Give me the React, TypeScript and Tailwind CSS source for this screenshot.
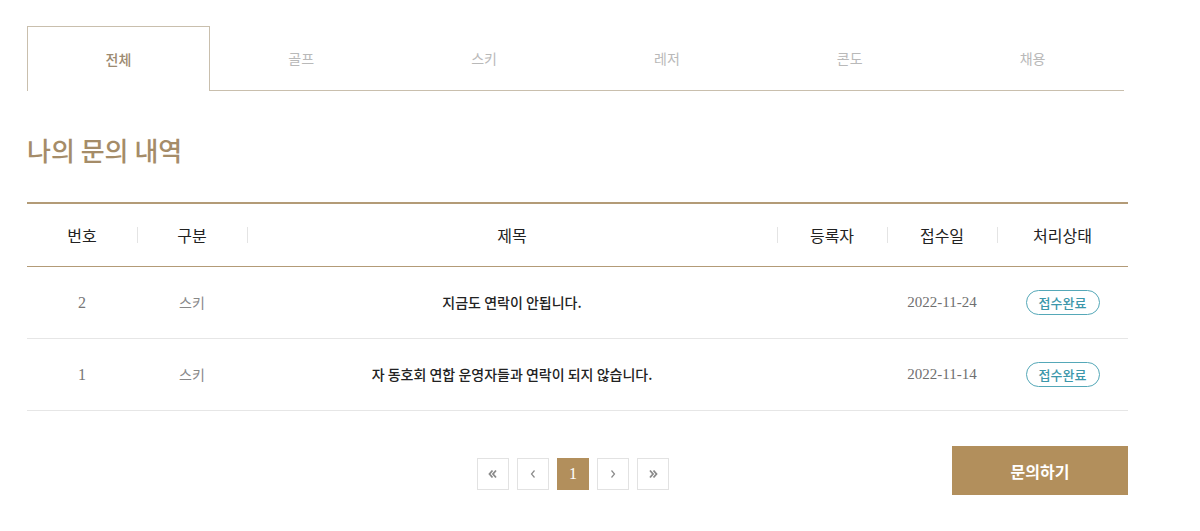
import React from 'react';

interface Inquiry {
  no: number;
  category: string;
  title: string;
  writer: string;
  date: string;
  status: string;
}

const tabs = ['전체', '골프', '스키', '레저', '콘도', '채용'];

const inquiries: Inquiry[] = [
  { no: 2, category: '스키', title: '지금도 연락이 안됩니다.', writer: '', date: '2022-11-24', status: '접수완료' },
  { no: 1, category: '스키', title: '자  동호회 연합 운영자들과 연락이 되지 않습니다.', writer: '', date: '2022-11-14', status: '접수완료' },
];

const cols = ['w-[110px]', 'w-[110px]', 'w-[530px]', 'w-[110px]', 'w-[110px]', 'flex-1'];
const heads = ['번호', '구분', '제목', '등록자', '접수일', '처리상태'];

const kr = { fontFamily: '"Noto Sans CJK KR", "Noto Sans", sans-serif' };
const serif = { fontFamily: '"Liberation Serif", "Noto Sans CJK KR", serif' };

// 페이지 화살표
const Chevron: React.FC<{ dir: 'left' | 'right'; double?: boolean }> = ({ dir, double }) => {
  const flip = dir === 'right' ? 'scale(-1,1) translate(-12,0)' : undefined;
  return (
    <svg width="12" height="12" viewBox="0 0 12 12" fill="none" stroke="#8a8a8a" strokeWidth={double ? 1.8 : 1.2}>
      <g transform={flip}>
        {double ? (
          <>
            <path d="M5.5 2.5 L2.5 6 L5.5 9.5" />
            <path d="M9 2.5 L6 6 L9 9.5" />
          </>
        ) : (
          <path d="M7.5 2.5 L4.5 6 L7.5 9.5" />
        )}
      </g>
    </svg>
  );
};

const App: React.FC = () => {
  const active = 0;

  return (
    <div className="w-[1200px] h-[531px] bg-white pl-[27px] pt-[26px] overflow-hidden" style={kr}>
      {/* 탭 */}
      <div className="grid grid-cols-6 w-[1097px] h-[65px]">
        {tabs.map((tab, i) => (
          <div
            key={tab}
            className={`flex items-center justify-center text-[14px] ${
              i === active
                ? 'border-t border-l border-r border-[#c9bfad] text-[#9c8a70] font-medium'
                : 'border-b border-[#c9bfad] text-[#b9b9b9]'
            }`}
          >
            {tab}
          </div>
        ))}
      </div>

      {/* 제목 */}
      <h2 className="mt-[43px] text-[26px] leading-[32px] font-medium text-[#a58c68]">나의 문의 내역</h2>

      {/* 테이블 */}
      <div className="mt-[36px] w-[1101px] border-t-2 border-[#b39b77]">
        <div className="flex items-center h-[63px] border-b border-[#b39b77]">
          {heads.map((h, i) => (
            <div key={h} className={`${cols[i]} relative flex items-center justify-center text-[16px] text-[#222]`}>
              {i > 0 && <span className="absolute left-0 top-1/2 -translate-y-1/2 w-px h-[16px] bg-[#e4e4e4]" />}
              {h}
            </div>
          ))}
        </div>

        {inquiries.map((q) => (
          <div key={q.no} className="flex items-center h-[72px] border-b border-[#e6e6e6]">
            <div className={`${cols[0]} text-center text-[16px] text-[#777]`} style={serif}>{q.no}</div>
            <div className={`${cols[1]} text-center text-[14px] text-[#888]`}>{q.category}</div>
            <div className={`${cols[2]} text-center text-[14px] text-[#222] font-medium`}>{q.title}</div>
            <div className={`${cols[3]} text-center text-[14px] text-[#777]`}>{q.writer}</div>
            <div className={`${cols[4]} text-center text-[15px] text-[#6f6f6f]`} style={serif}>{q.date}</div>
            <div className={`${cols[5]} flex justify-center`}>
              <span className="inline-flex items-center justify-center w-[74px] h-[25px] rounded-full border border-[#55a8b8] text-[#3c97aa] text-[13px] font-medium">
                {q.status}
              </span>
            </div>
          </div>
        ))}
      </div>

      {/* 페이지네이션 + 버튼 */}
      <div className="relative w-[1101px] mt-[35px] h-[50px]">
        <div className="flex items-center gap-[8px] pl-[450px] pt-[12px]">
          <button className="w-[32px] h-[32px] border border-[#e2e2e2] flex items-center justify-center">
            <Chevron dir="left" double />
          </button>
          <button className="w-[32px] h-[32px] border border-[#e2e2e2] flex items-center justify-center">
            <Chevron dir="left" />
          </button>
          <button className="w-[32px] h-[32px] bg-[#b28f5c] flex items-center justify-center text-white text-[16px]" style={serif}>1</button>
          <button className="w-[32px] h-[32px] border border-[#e2e2e2] flex items-center justify-center">
            <Chevron dir="right" />
          </button>
          <button className="w-[32px] h-[32px] border border-[#e2e2e2] flex items-center justify-center">
            <Chevron dir="right" double />
          </button>
        </div>
        <button className="absolute right-0 top-0 w-[176px] h-[49px] bg-[#b28f5c] text-white text-[16px] font-bold">
          문의하기
        </button>
      </div>
    </div>
  );
};

export default App;
